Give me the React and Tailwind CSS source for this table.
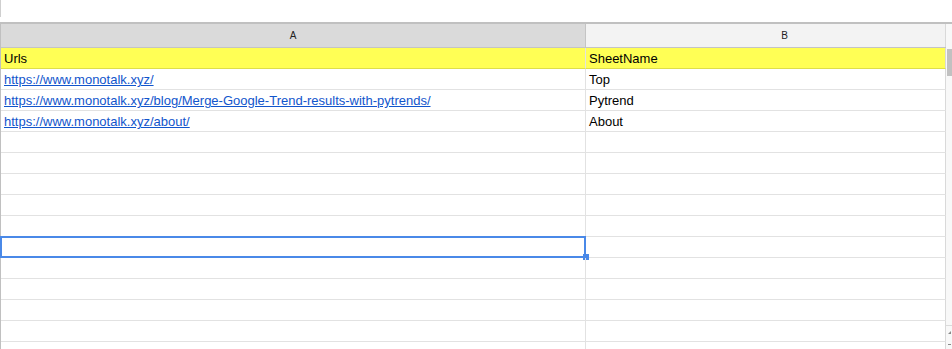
import React from "react";

const font = { fontFamily: '"Liberation Sans", Arial, sans-serif' };

const rows = [
  { a: "https://www.monotalk.xyz/", b: "Top" },
  { a: "https://www.monotalk.xyz/blog/Merge-Google-Trend-results-with-pytrends/", b: "Pytrend" },
  { a: "https://www.monotalk.xyz/about/", b: "About" },
  {}, {}, {}, {}, {}, {}, {}, {}, {}, {}, {},
];

function Cell({ children, className = "", link }) {
  return (
    <div className={`flex items-end pb-[2px] pl-[3px] h-[21px] border-b border-[#e2e2e2] text-[13px] leading-[15px] whitespace-nowrap overflow-hidden ${className}`}>
      {link ? <span className="text-[#1155cc] underline">{children}</span> : <span className="text-black">{children}</span>}
    </div>
  );
}

export default function App() {
  return (
    <div className="w-[952px] h-[349px] overflow-hidden bg-white" style={font}>
      <div className="h-[22px] flex">
        <div className="w-px h-[17px] bg-[#cfcfcf]" />
      </div>
      <div className="flex border-t-2 border-[#c0c0c0]">
        <div className="w-[946px] flex flex-col border-l border-[#c0c0c0]">
          {/* column headers */}
          <div className="flex h-[24px] border-b border-[#c4c4c4]">
            <div className="w-[585px] flex items-center justify-center bg-[#dadada] border-r border-[#c4c4c4] text-[10px] text-[#222]">A</div>
            <div className="w-[360px] flex items-center justify-center pl-[38px] bg-[#f3f3f3] border-r border-[#d9d9d9] text-[10px] text-[#222]">B</div>
          </div>
          {/* yellow header row */}
          <div className="flex bg-[#ffff55]">
            <Cell className="w-[585px] border-r border-r-[#e2e2e2] border-b-[#dede4a]">Urls</Cell>
            <Cell className="w-[360px] border-r border-r-[#d9d9d9] border-b-[#dede4a]">SheetName</Cell>
          </div>
          {rows.map((r, i) => (
            <div key={i} className="flex">
              <div className="relative w-[585px]">
                <Cell className="border-r border-r-[#e2e2e2]" link>{r.a}</Cell>
                {i === 8 && (
                  <>
                    <div className="absolute left-[-1px] right-0 top-[-1px] h-[22px] border-2 border-[#4a89e8] pointer-events-none" />
                    <div className="absolute right-[-3px] top-[17px] w-[6px] h-[6px] bg-[#4a89e8]" />
                  </>
                )}
              </div>
              <Cell className="w-[360px] border-r border-r-[#d9d9d9]">{r.b}</Cell>
            </div>
          ))}
        </div>
        <div className="w-[6px] flex flex-col bg-[#f8f8f8]">
          <div className="h-[25px]" />
          <div className="ml-px h-[27px] bg-[#c1c1c1]" />
          <div className="h-[249px]" />
          <div className="h-px bg-[#dadada]" />
          <div className="flex flex-col items-end pr-px pt-[5px] gap-[10px]">
            <div className="w-0 h-0 border-l-[3px] border-l-transparent border-b-[3px] border-b-[#8a8a8a]" />
            <div className="w-[3px] h-px bg-[#8a8a8a]" />
          </div>
        </div>
      </div>
    </div>
  );
}
